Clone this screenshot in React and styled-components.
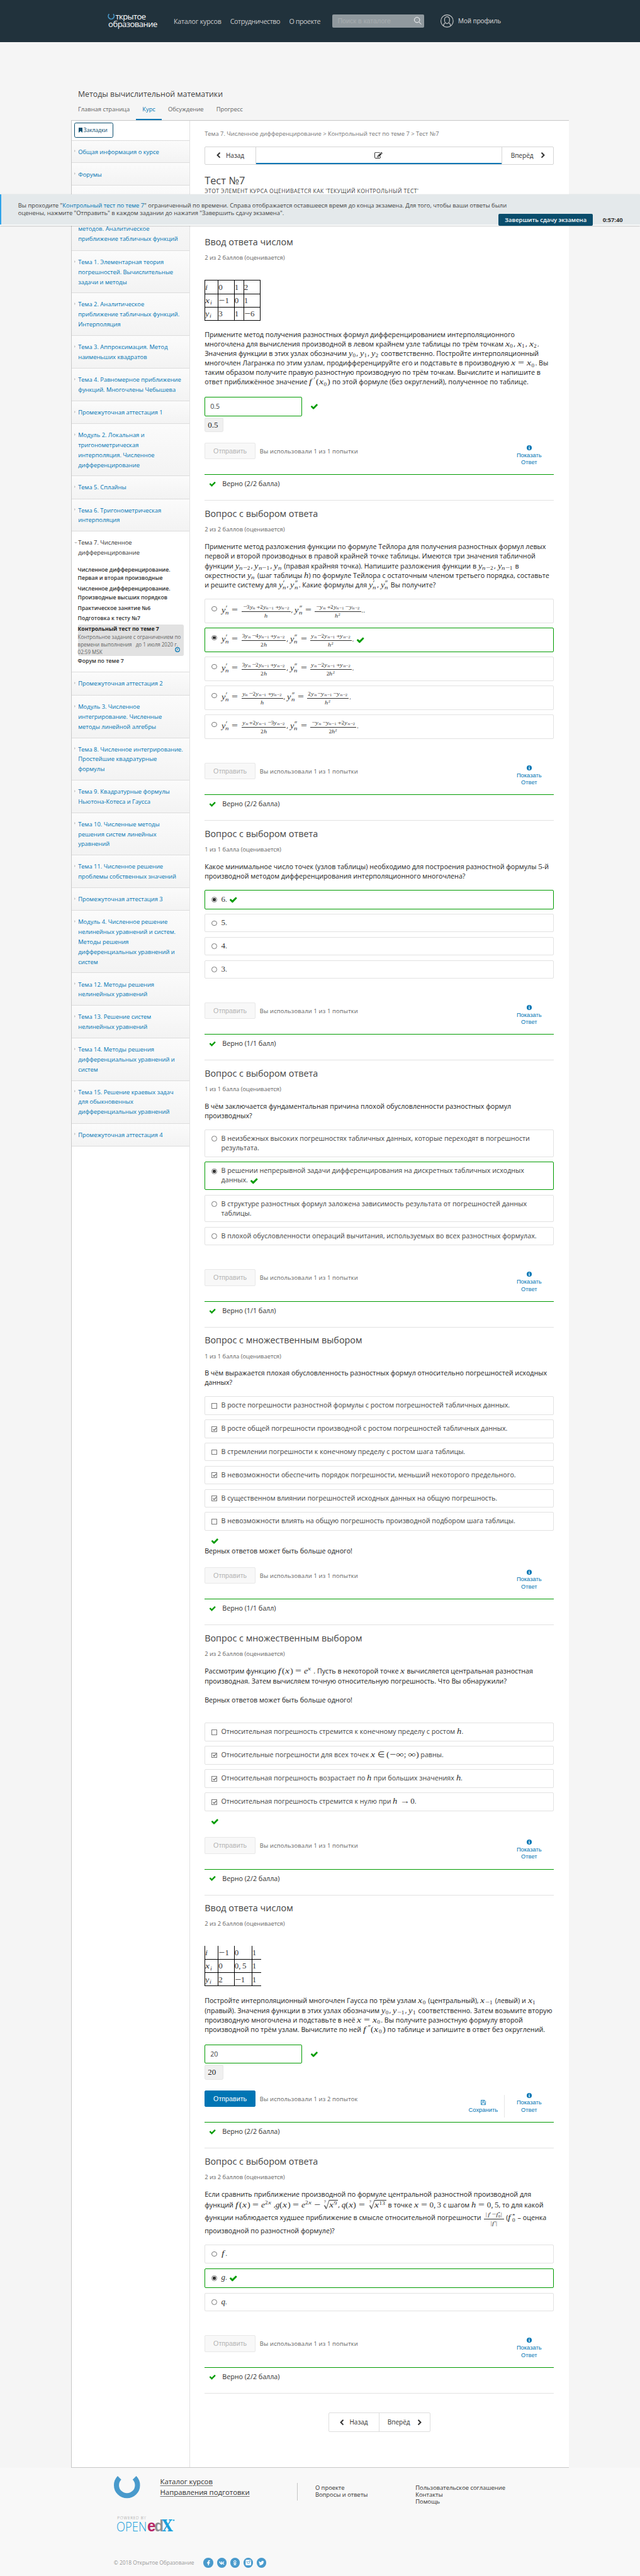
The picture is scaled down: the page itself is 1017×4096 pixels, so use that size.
import React from 'react';
import styled, { createGlobalStyle, css } from 'styled-components';
import { FaFacebookF, FaVk, FaOdnoklassniki, FaTwitter } from 'react-icons/fa';

const Global = createGlobalStyle`
  html, body { margin: 0; padding: 0; overflow: hidden; background: #f8f8f8; }
  *, *::before, *::after { box-sizing: border-box; }
`;

const sans = `"Open Sans", "Noto Sans", sans-serif`;
const arial = `"Liberation Sans", Arial, sans-serif`;
const serif = `"Liberation Serif", "Times New Roman", serif`;

const Page = styled.div`
  position: relative;
  zoom: 0.6697;
  width: 1519px;
  height: 6116px;
  background: #f5f5f5;
  font-family: ${sans};
  color: #313131;
  white-space: nowrap;
  overflow: hidden;
`;

/* ---------- icons ---------- */
const paths = {
  check: 'M1671 566q0 40-28 68l-724 724-136 136q-28 28-68 28t-68-28l-136-136-362-362q-28-28-28-68t28-68l136-136q28-28 68-28t68 28l294 295 656-657q28-28 68-28t68 28l136 136q28 28 28 68z',
  left: 'M1427 301l-531 531 531 531q19 19 19 45t-19 45l-166 166q-19 19-45 19t-45-19l-742-742q-19-19-19-45t19-45l742-742q19-19 45-19t45 19l166 166q19 19 19 45t-19 45z',
  edit: 'M888 1184l116-116-152-152-116 116v56h96v96h56zm440-720q-16-16-33 1l-350 350q-17 17-1 33t33-1l350-350q17-17 1-33zm80 594v190q0 119-84.5 203.5t-203.5 84.5h-832q-119 0-203.5-84.5t-84.5-203.5v-832q0-119 84.5-203.5t203.5-84.5h832q63 0 117 25 15 7 18 23 3 17-9 29l-49 49q-14 14-32 8-23-6-45-6h-832q-66 0-113 47t-47 113v832q0 66 47 113t113 47h832q66 0 113-47t47-113v-126q0-13 9-22l64-64q15-15 35-7t20 29zm-96-738l288 288-672 672h-288v-288zm444 132l-92 92-288-288 92-92q28-28 68-28t68 28l152 152q28 28 28 68t-28 68z',
};
const Svg = styled.svg`display: block; flex: none; overflow: visible;`;
const InlineSvg = styled(Svg)`display: inline-block; vertical-align: -2px; margin: -4px 0 -4px ${(p) => p.$gap || 0}px;`;

const Check = ({ size = 19, inline, gap }) => {
  const C = inline ? InlineSvg : Svg;
  return <C $gap={gap} width={size} height={size} viewBox="0 0 1792 1792" fill="#009b00"><path d={paths.check} /></C>;
};
const Chevron = ({ flip }) => (
  <Svg width="15" height="15" viewBox="0 0 1792 1792" fill="#333">
    <path d={paths.left} transform={flip ? 'translate(1792 0) scale(-1 1)' : undefined} />
  </Svg>
);
const Info = () => (
  <Svg width="12" height="12" viewBox="0 0 12 12">
    <circle cx="6" cy="6" r="6" fill="#0075b4" />
    <path d="M5 2h2v1.600H5zM4.200 4.700H7v3.800h.8v1.300H4.200V8.500H5V6h-.8z" fill="#fff" />
  </Svg>
);
const Floppy = () => (
  <Svg width="12" height="12" viewBox="0 0 12 12" fill="none" stroke="#0075b4" strokeWidth="1.1">
    <path d="M.6 .6h8.200l2.600 2.600v8.200H.6zM2.800 .6v3.600h5.400V.6M6.400 1.200v2M2.400 11.400V7h7.200v4.400" />
  </Svg>
);
const Clock = () => (
  <Svg width="12" height="12" viewBox="0 0 12 12" fill="none" stroke="#0075b4" strokeWidth="1.7">
    <circle cx="6" cy="6" r="5" /><path d="M6.400 3v3.400H4" strokeWidth="1.1" />
  </Svg>
);
const Photo = () => (
  <Svg width="14" height="14" viewBox="0 0 14 14">
    <rect x="0.500" y="0.500" width="13" height="13" rx="2" fill="#fff" />
    <path d="M1.500 4.500h3.500M9 4.500h3.500" stroke="#499acc" strokeWidth="1" />
    <rect x="9.500" y="1.800" width="2.300" height="2" fill="#499acc" />
    <circle cx="7" cy="7" r="2.700" fill="#fff" stroke="#499acc" strokeWidth="1.2" />
  </Svg>
);
const Horseshoe = ({ size, stroke }) => (
  <Svg width={size} height={size} viewBox="0 0 62 62" fill="none" stroke="#499acc" strokeWidth={stroke}>
    <path d="M13.200 13.200A25 25 0 1 0 48.800 13.200" />
  </Svg>
);

/* ---------- math ---------- */
const MathBox = styled.span`
  font-family: ${serif};
  font-size: ${(p) => p.$size || 19.4}px;
  line-height: 0;
  color: #333;
`;
const Sym = styled.span`
  display: inline-block;
  font-style: ${(p) => (p.$up ? 'normal' : 'italic')};
  width: ${(p) => p.$w}em;
  margin: 0 ${(p) => p.$m || 0}em;
  transform: scaleX(${(p) => p.$k || 1});
  transform-origin: left;
`;
const Prime = styled.span`
  display: inline-block;
  width: ${(p) => (p.$two ? 0.5 : 0.3)}em;
  transform: translateY(0.2em) skewX(-10deg) scale(1.15, 1.5);
  transform-origin: left;
`;
const Script = styled.span`
  font-size: 0.707em;
  position: relative;
  top: ${(p) => (p.$sup ? '-0.55em' : '0.24em')};
  margin-right: 0.14em;
`;
const Pair = styled.span`
  display: inline-flex;
  flex-direction: column;
  font-size: 0.707em;
  line-height: 0.86em;
  vertical-align: 0.52em;
  margin: -1em 0.13em -1em 0;
`;
const glyphs = { x: [0.572, 1.22], y: [0.51, 1.1], f: [0.51, 1.25], h: [0.576, 1.12], g: [0.49, 1], q: [0.47, 1], n: [0.6, 1.18], i: [0.345, 1.1], e: [0.466, 1.05] };
const upright = { '~': [0.778, 1.36], '∞': [1, 1.38], ',': [0.44, 1], ';': [0.44, 1], '(': [0.389, 1.1], ')': [0.389, 1.1] };
const binary = { '=': 0.278, '−': 0.222, '+': 0.222, '∈': 0.278, '→': 0.278 };
const stretch = { '→': [1, 1.2], '∈': [0.778, 1] };

function tex(s, script) {
  const out = [];
  const group = (i) => { const e = s.indexOf('}', i); return [s.slice(i + 2, e), e + 1]; };
  let i = 0;
  while (i < s.length) {
    const c = s[i];
    if (c === '_' || c === '^') {
      const [a, next] = group(i);
      if (c === '_' && s[next] === '^') {
        const [b, after] = group(next);
        out.push(<Pair key={i}><span>{tex(b, true)}</span><span>{tex(a, true)}</span></Pair>);
        i = after;
      } else {
        out.push(<Script key={i} $sup={c === '^'}>{tex(a, true)}</Script>);
        i = next;
      }
      continue;
    }
    if (glyphs[c]) out.push(<Sym key={i} $w={glyphs[c][0]} $k={glyphs[c][1]}>{c}</Sym>);
    else if (c === '′' || c === '″') out.push(<Prime key={i} $two={c === '″'}>{c}</Prime>);
    else if (upright[c]) out.push(<Sym key={i} $up $w={upright[c][0]} $k={upright[c][1]}>{c === '~' ? '−' : c}</Sym>);
    else if (binary[c]) {
      const [w, k] = stretch[c] || [0.778, 1.36];
      out.push(<Sym key={i} $up $w={w} $k={k} $m={script ? 0 : binary[c]}>{c}</Sym>);
    } else out.push(c);
    i += 1;
  }
  return out;
}
const M = ({ children, size }) => <MathBox $size={size}>{tex(children)}</MathBox>;

const FracBox = styled.span`
  display: inline-flex;
  flex-direction: column;
  align-items: center;
  width: ${(p) => p.$w}px;
  margin: -20px 1px -20px 2px;
  font-size: 13.7px;
  vertical-align: 9.4px;
`;
const Num = styled.span`
  display: ${(p) => (p.$tight ? 'block' : 'flex')};
  align-items: baseline;
  align-self: stretch;
  justify-content: space-between;
  text-align: center;
  line-height: 14px;
  padding: 0 2px 2.8px;
  border-bottom: 1.5px solid #333;
`;
const Den = styled.span`line-height: 18px;`;
const Frac = ({ n, d, w, tight }) => (
  <MathBox><FracBox $w={w}><Num $tight={tight}>{tex(n, true)}</Num><Den>{tex(d, true)}</Den></FracBox></MathBox>
);
const RootBody = styled.span`
  display: inline-block;
  line-height: 21px;
  margin: -8px 0;
  border-top: 1.5px solid #333;
  padding-right: 1px;
  & ${Script} { top: -0.42em; line-height: 0; }
`;
const RootSign = styled.svg`display: inline-block; vertical-align: 4px; margin: -8px 0; overflow: visible;`;
const Root = ({ children }) => (
  <MathBox>
    <RootSign width="17" height="22" viewBox="0 0 17 22" fill="none" stroke="#333" strokeWidth="1.2">
      <text x="4" y="8" fontSize="10" fill="#333" stroke="none">7</text>
      <path d="M4 14.500l2-1.200" />
      <path d="M6 13.300l3.600 7.700" strokeWidth="1.9" />
      <path d="M9.600 21.500L16.800 0.200" />
    </RootSign>
    <RootBody>{tex(children)}</RootBody>
  </MathBox>
);

/* ---------- header ---------- */
const Header = styled.header`
  height: 100px;
  background: #21323c;
  display: flex;
  align-items: flex-start;
  padding-left: 255px;
  color: #ccc;
`;
const Logo = styled.div`width: 157px; padding-top: 30px; color: #fff; font-size: 19.500px; line-height: 18px;`;
const LogoTop = styled.div`display: flex; gap: 2px; height: 18px; letter-spacing: -0.9px; line-height: 20px;`;
const LogoBottom = styled.div`padding-left: 2px; line-height: 18px; letter-spacing: -0.8px;`;
const HeadLink = styled.a`
  font-size: 16px;
  line-height: 22px;
  padding-top: 40px;
  width: ${(p) => p.$w}px;
  letter-spacing: ${(p) => p.$ls || 0}px;
`;
const Search = styled.div`
  margin-top: 35px;
  width: 219px;
  height: 30px;
  border-radius: 3px;
  background: #90999e;
  color: #a7adb0;
  font: 16px/30px ${arial};
  padding: 0 6px 0 13px;
  display: flex;
  justify-content: space-between;
  align-items: center;
`;
const Profile = styled.div`
  display: flex;
  gap: 11px;
  padding: 34px 0 0 38px;
  font: 16px/31px ${arial};
`;

/* ---------- course head ---------- */
const CourseHead = styled.div`height: 185px; padding: 109px 0 0 185px;`;
const CourseName = styled.div`font-size: 18.500px; line-height: 29px; height: 28px; color: #434343; font-weight: 500;`;
const Tabs = styled.nav`display: flex; margin: 9px 0 0 -15px; height: 39px;`;
const Tab = styled.a`
  padding: 0 15px;
  height: 39px;
  font-size: 14px;
  line-height: 28px;
  color: ${(p) => (p.$on ? '#0075b4' : '#646464')};
  border-bottom: 4px solid ${(p) => (p.$on ? '#0075b4' : 'transparent')};
`;

const Shell = styled.div`
  margin-left: 169px;
  width: 1181px;
  height: 5574px;
  border: solid #c8c8c8;
  border-width: 1px 0 1px 1px;
  background: #fff;
  display: flex;
`;
const Sidebar = styled.aside`width: 280px; border-right: 1px solid #e2e2e2;`;
const BookmarkBar = styled.div`height: 46px; padding: 5px;`;
const Bookmark = styled.a`
  display: flex;
  align-items: center;
  gap: 2px;
  width: 94px;
  height: 36px;
  padding-left: 10px;
  border: 1px solid #0a4d6e;
  border-radius: 4px;
  color: #0a4d6e;
  font-size: 13px;
  letter-spacing: -0.2px;
`;
const Item = styled.div`
  height: ${(p) => p.$h}px;
  border-top: ${(p) => p.$bt ?? 1}px solid #dcdcdc;
  background: ${(p) => (p.$open ? '#fff' : 'linear-gradient(#fbfbfb, #f3f3f3)')};
  padding: 15px 0 0 5px;
  display: flex;
  align-items: flex-start;
  font-size: 14px;
  line-height: 23.670px;
  color: ${(p) => (p.$open ? '#313131' : '#0075b4')};
`;
const Arrow = styled.span`
  width: 4px;
  margin: 7px 6px 0 0;
  border-left: 4px solid #c4c4c4;
  border-top: 4px solid transparent;
  border-bottom: 4px solid transparent;
  ${(p) => p.$down && css`
    width: 8px; margin: 10px 2px 0 0;
    border: 4px solid transparent; border-top-color: #c4c4c4; border-bottom: 0;
  `}
`;
const ClippedItem = styled(Item)`align-items: flex-end; padding: 0 0 16px 15px;`;
const Sub = styled.div`
  font-size: 12.950px;
  font-weight: 600;
  line-height: 20.500px;
  margin-bottom: ${(p) => p.$mb ?? 4.5}px;
`;
const Current = styled.div`
  margin: 3px 0 4px 14px;
  width: 251px;
  height: 74px;
  border-radius: 4px;
  background: #e2e2e2;
  font-size: 12px;
  line-height: 17.600px;
  color: #666;
  position: relative;
`;
const CurrentName = styled.div`font-size: 12.950px; font-weight: 700; color: #222; line-height: 21px; height: 21px;`;
const ClockSpot = styled.span`position: absolute; right: 8px; bottom: 9px;`;
const Open = styled.div`height: 334.500px; border-top: 1px solid #dcdcdc;`;
const OpenSubs = styled.div`padding-left: 14px;`;

/* ---------- main column ---------- */
const Main = styled.main`width: 829px; margin-left: 35px; padding-top: 21px; display: flex; flex-direction: column;`;
const Crumbs = styled.div`font-size: 14px; line-height: 20px; color: #777;`;
const Seq = styled.div`
  margin-top: 20px;
  height: 44px;
  display: flex;
  border: 1px solid #d5d5d5;
  border-radius: 3px;
  font: 15px/42px ${sans};
  color: #313131;
`;
const SeqBtn = styled.div`
  display: flex;
  align-items: center;
  width: ${(p) => p.$w}px;
  gap: ${(p) => p.$gap || 15}px;
  padding-left: ${(p) => p.$pl}px;
`;
const SeqMid = styled.div`
  flex: 1;
  border: solid #d5d5d5;
  border-width: 0 1px;
  box-shadow: inset 0 -3px #0075b4;
  display: flex;
  align-items: center;
  justify-content: center;
`;
const UnitTitle = styled.h1`margin: 21px 0 0; font-size: 24.500px; font-weight: 400; line-height: 32px; color: #434343;`;
const Grade = styled.div`font-size: 13px; line-height: 18px; letter-spacing: 0.57px; color: #434343; margin-bottom: 82px;`;

const ProblemBox = styled.section`
  height: ${(p) => p.$h}px;
  border-bottom: 1.5px solid #e2e2e2;
  padding-top: 15.800px;
  display: flex;
  flex-direction: column;
  flex: none;
`;
const PTitle = styled.h3`margin: 0; font-size: 21.500px; font-weight: 400; line-height: 30px; color: #434343;`;
const Score = styled.div`margin-top: 12px; font-size: 14px; line-height: 20px; color: #646464;`;
const Body = styled.div`flex: 1; padding-top: ${(p) => p.$pt ?? 20}px;`;
const Line = styled.div`
  height: ${(p) => 22.4 + (p.$gap || 0)}px;
  padding-top: ${(p) => p.$gap || 0}px;
  font-size: 16px;
  line-height: 22.400px;
  color: #222;
`;
const Options = styled.div`display: flex; flex-direction: column; gap: 11px; margin-top: ${(p) => p.$mt || 21}px;`;
const Option = styled.label`
  height: ${(p) => p.$h || 44}px;
  border: 1.5px solid ${(p) => (p.$good ? '#009b00' : '#e2e2e2')};
  border-radius: 3px;
  padding: ${(p) => p.$pt || 9}px 0 0 15px;
  display: flex;
  align-items: flex-start;
  gap: 10px;
  font-size: 16px;
  line-height: 22.400px;
  color: #434343;
`;
const Radio = styled.span`
  flex: none;
  width: 13px;
  height: 13px;
  margin-top: ${(p) => p.$mt || 5.5}px;
  border: 1px solid #777;
  border-radius: ${(p) => (p.$square ? 0 : '50%')};
  background: ${(p) => (p.$on && !p.$square ? 'radial-gradient(#333 0 3.800px, #fff 4.400px)' : '#fff')};
  display: flex;
  align-items: center;
  justify-content: center;
`;
const Tick = () => <Svg width="9" height="8" viewBox="0 0 9 8" fill="none" stroke="#444" strokeWidth="1.5"><path d="M.8 4l2.500 2.700L8.300 1" /></Svg>;

const InputRow = styled.div`display: flex; align-items: center; gap: 19px; margin-top: ${(p) => p.$mt || 23.4}px;`;
const Input = styled.div`
  width: 232px;
  height: 46px;
  border: 1.5px solid #009b00;
  border-radius: 3px;
  padding-left: 12px;
  font-size: 16px;
  line-height: 44px;
  color: #434343;
`;
const Preview = styled.div`
  margin-top: 3px;
  width: 44px;
  height: 35px;
  border: 1px solid #e6e6e6;
  border-radius: 4px;
  background: #f0f0f0;
  padding: 0 0 0 6px;
  font: 19.4px/33px ${serif};
  color: #222;
`;
const CheckLine = styled.div`margin: 15px 0 0 15px; height: 20px; display: flex; align-items: center;`;

const Actions = styled.div`height: 75.500px; display: flex; align-items: flex-start;`;
const Submit = styled.div`
  width: 121px;
  height: 39.700px;
  border: 1px solid ${(p) => (p.$on ? '#0075b4' : '#e8e8e8')};
  border-radius: 3px;
  background: ${(p) => (p.$on ? '#0075b4' : '#f8f8f8')};
  color: ${(p) => (p.$on ? '#fff' : '#b4b4b4')};
  font: 16px/38px ${arial};
  text-align: center;
`;
const Attempts = styled.div`margin-left: 10px; flex: 1; font-size: 14px; line-height: 41px; color: #646464; letter-spacing: 0.25px;`;
const ActionBtn = styled.div`
  margin-top: ${(p) => p.$mt || 6}px;
  width: ${(p) => p.$w}px;
  display: flex;
  flex-direction: column;
  align-items: center;
  text-align: center;
  color: #0075b4;
  font: 14px/17px ${arial};
  gap: 4px;
`;
const Divider = styled.div`width: 1px; height: ${(p) => p.$h}px; margin-top: ${(p) => p.$mt}px; background: ${(p) => p.$c || '#e6e6e6'};`;
const Feedback = styled.div`
  height: 61px;
  border-top: 2px solid #009b00;
  padding-left: 10px;
  display: flex;
  align-items: flex-start;
  gap: 15px;
  font-size: 16px;
  line-height: 42px;
  color: #313131;
  & svg { margin-top: 13px; }
`;

const Table = styled.table`
  margin-top: 23px;
  border-collapse: collapse;
  table-layout: fixed;
  width: ${(p) => p.$w}px;
  font: 19.4px/20px ${serif};
  & td {
    height: 31.600px;
    padding: 0;
    border: 1.5px solid #000;
    vertical-align: middle;
    line-height: 20px;
  }
  ${(p) => p.$open && css`
    tr:first-child td { border-top: 0; }
    td:last-child { border-right: 0; }
  `}
`;
const MathTable = ({ cols, rows, open }) => (
  <Table $w={cols.reduce((a, b) => a + b, 0)} $open={open}>
    <colgroup>{cols.map((c, i) => <col key={i} width={c} />)}</colgroup>
    <tbody>{rows.map((r, i) => <tr key={i}>{r.map((c, j) => <td key={j}><M>{c}</M></td>)}</tr>)}</tbody>
  </Table>
);

function Problem({ h, title, score, pt, children, verdict, retry }) {
  return (
    <ProblemBox $h={h}>
      <PTitle>{title}</PTitle>
      <Score>{score}</Score>
      <Body $pt={pt}>{children}</Body>
      <Actions>
        <Submit $on={retry}>Отправить</Submit>
        <Attempts>Вы использовали {retry ? '1 из 2 попыток' : '1 из 1 попытки'}</Attempts>
        {retry && <><ActionBtn $w={98} $mt={23}><Floppy />Сохранить</ActionBtn><Divider $h={54} $mt={11} /></>}
        <ActionBtn $w={118}><Info /><span>Показать<br />Ответ</span></ActionBtn>
      </Actions>
      <Feedback><Check size={17} />Верно {verdict}</Feedback>
    </ProblemBox>
  );
}
const Choice = ({ on, good, square, h, pt, rmt, children }) => (
  <Option $good={good} $h={h} $pt={pt}>
    <Radio $on={on} $square={square} $mt={rmt}>{on && square && <Tick />}</Radio>
    <span>{children}{good && <Check size={20} inline gap={5} />}</span>
  </Option>
);
const Formula = ({ n1, d1, w1, n2, d2, w2, end = '.', good }) => (
  <Choice h={57.7} pt={14.8} rmt={0.5} on={good} good={good}>
    <M>{'y_{n}^{′}='}</M><Frac n={n1} d={d1} w={w1} />, <M>{'y_{n}^{″}='}</M><Frac n={n2} d={d2} w={w2} />{end}
  </Choice>
);

const PRADIO = 'Вопрос с выбором ответа';
const PMULTI = 'Вопрос с множественным выбором';
const PNUM = 'Ввод ответа числом';
const S1 = '1 из 1 балла (оценивается)';
const S2 = '2 из 2 баллов (оценивается)';

const before = [
  [100.5, ['Тема 1. Элементарная теория', 'погрешностей. Вычислительные', 'задачи и методы']],
  [101, ['Тема 2. Аналитическое', 'приближение табличных функций.', 'Интерполяция']],
  [78, ['Тема 3. Аппроксимация. Метод', 'наименьших квадратов']],
  [77, ['Тема 4. Равномерное приближение', 'функций. Многочлены Чебышева']],
  [54, ['Промежуточная аттестация 1']],
  [124.5, ['Модуль 2. Локальная и', 'тригонометрическая', 'интерполяция. Численное', 'дифференцирование']],
  [54, ['Тема 5. Сплайны']],
  [77.5, ['Тема 6. Тригонометрическая', 'интерполяция']],
];
const after = [
  [54.5, ['Промежуточная аттестация 2']],
  [101, ['Модуль 3. Численное', 'интегрирование. Численные', 'методы линейной алгебры']],
  [100.5, ['Тема 8. Численное интегрирование.', 'Простейшие квадратурные', 'формулы']],
  [77.5, ['Тема 9. Квадратурные формулы', 'Ньютона-Котеса и Гаусса']],
  [100.5, ['Тема 10. Численные методы', 'решения систем линейных', 'уравнений']],
  [77.5, ['Тема 11. Численное решение', 'проблемы собственных значений']],
  [54, ['Промежуточная аттестация 3']],
  [148.5, ['Модуль 4. Численное решение', 'нелинейных уравнений и систем.', 'Методы решения', 'дифференциальных уравнений и', 'систем']],
  [77.5, ['Тема 12. Методы решения', 'нелинейных уравнений']],
  [77.5, ['Тема 13. Решение систем', 'нелинейных уравнений']],
  [100.5, ['Тема 14. Методы решения', 'дифференциальных уравнений и', 'систем']],
  [101.5, ['Тема 15. Решение краевых задач', 'для обыкновенных', 'дифференциальных уравнений']],
  [54, ['Промежуточная аттестация 4']],
];
const Lines = ({ of }) => <span>{of.map((t, i) => <React.Fragment key={i}>{i > 0 && <br />}{t}</React.Fragment>)}</span>;
const renderItem = ([h, lines]) => <Item key={lines[0]} $h={h}><Arrow /><Lines of={lines} /></Item>;
const SideEnd = styled.div`border-top: 1px solid #dcdcdc;`;

/* ---------- exam banner ---------- */
const Banner = styled.div`
  position: absolute;
  top: 461px;
  left: 0;
  width: 1519px;
  height: 75px;
  background: #f6f8f8;
  box-shadow: 0 2px 3px rgba(0, 0, 0, 0.45);
`;
const BannerInner = styled.div`
  height: 72px;
  background: #e4e9eb;
  border-left: 4px solid #2ea3ea;
  padding: 19px 0 0 40px;
  font-size: 14px;
  line-height: 16.700px;
  color: #434343;
  display: flex;
  align-items: flex-start;
  & a { color: #0075b4; }
`;
const BannerText = styled.div`width: 1140px; flex: none;`;
const EndExam = styled.div`
  margin-top: 27px;
  width: 224px;
  height: 29px;
  border-radius: 3px;
  background: #0a4d6c;
  color: #fff;
  font-weight: 600;
  font-size: 14px;
  line-height: 29px;
  text-align: center;
`;
const Timer = styled.div`margin: 27px 0 0 23px; font-weight: 700; line-height: 29px; color: #313131;`;

/* ---------- footer ---------- */
const BottomNav = styled.div`
  margin: 45.500px auto 0;
  width: 242px;
  height: 46px;
  border: 1px solid #dedede;
  border-radius: 3px;
  display: flex;
  font: 15px/43px ${sans};
`;
const Footer = styled.footer`height: 257px; background: #f8f8f8; padding: 11px 0 0 270px;`;
const FootRow = styled.div`display: flex; align-items: flex-start; height: 100px;`;
const Major = styled.div`
  width: 325px;
  margin-left: 48px;
  padding-top: 10px;
  font-size: 17px;
  line-height: 25px;
  color: #313131;
  & u { text-underline-offset: 3px; text-decoration-color: #777; text-decoration-thickness: 1.5px; }
`;
const Minor = styled.div`width: ${(p) => p.$w}px; padding-top: 30px; font-size: 14px; line-height: 16px; color: #313131;`;
const Inset = styled.div`padding-left: 42px;`;
const Copy = styled.div`display: flex; align-items: center; height: 24px; margin-top: 63px; font-size: 12.500px; color: #999;`;
const Social = styled.span`
  width: 23px;
  height: 23px;
  margin-right: 8.600px;
  border-radius: 50%;
  background: #499acc;
  color: #fff;
  display: flex;
  align-items: center;
  justify-content: center;
  font-size: 13px;
`;
const CopyText = styled.span`width: 213px; margin-top: -3px;`;

export default function App() {
  return (
    <Page>
      <Global />
      <Header>
        <Logo>
          <LogoTop><Horseshoe size={17} stroke={9} />ткрытое</LogoTop>
          <LogoBottom>образование</LogoBottom>
        </Logo>
        <HeadLink $w={134} $ls={-0.3}>Каталог курсов</HeadLink>
        <HeadLink $w={140} $ls={-0.6}>Сотрудничество</HeadLink>
        <HeadLink $w={102} $ls={-0.6}>О проекте</HeadLink>
        <Search>
          Поиск в каталоге
          <Svg width="18" height="18" viewBox="0 0 18 18" fill="none" stroke="#fff" strokeWidth="1.4"><circle cx="7" cy="7" r="6.3" /><path d="M11.500 11.500L17 17.500" /></Svg>
        </Search>
        <Profile>
          <Svg width="31" height="31" viewBox="0 0 31 31" fill="none" stroke="#ccc" strokeWidth="1.7">
            <circle cx="15.5" cy="15.5" r="14.6" />
            <path d="M15.500 5.500c4 0 6 3 6 7.500s-2.500 8.500-6 8.500-6-4-6-8.500 2-7.500 6-7.500zM7 27c.5-4.500 2-6 4.500-7.500M24 27c-.5-4.500-2-6-4.500-7.500" />
          </Svg>
          Мой профиль
        </Profile>
      </Header>

      <CourseHead>
        <CourseName>Методы вычислительной математики</CourseName>
        <Tabs><Tab>Главная страница</Tab><Tab $on>Курс</Tab><Tab>Обсуждение</Tab><Tab>Прогресс</Tab></Tabs>
      </CourseHead>

      <Shell>
        <Sidebar>
          <BookmarkBar>
            <Bookmark><Svg width="9" height="12" viewBox="0 0 9 12" fill="#0a4d6e"><path d="M0 0h9v12L4.500 8 0 12z" /></Svg>Закладки</Bookmark>
          </BookmarkBar>
          <Item $h={53.5}><Arrow />Общая информация о курсе</Item>
          <Item $h={53}><Arrow />Форумы</Item>
          <ClippedItem $h={155.5} $bt={2}><Lines of={['методов. Аналитическое', 'приближение табличных функций']} /></ClippedItem>
          {before.map(renderItem)}
          <Open>
            <Item $h={81} $open $bt={0}><Arrow $down /><Lines of={['Тема 7. Численное', 'дифференцирование']} /></Item>
            <OpenSubs>
              <Sub>Численное дифференцирование.<br />Первая и вторая производные</Sub>
              <Sub>Численное дифференцирование.<br />Производные высших порядков</Sub>
              <Sub>Практическое занятие №6</Sub>
              <Sub $mb={0}>Подготовка к тесту №7</Sub>
            </OpenSubs>
            <Current>
              <CurrentName>Контрольный тест по теме 7</CurrentName>
              Контрольное задание с ограничением по<br />времени выполнения &nbsp; до 1 июля 2020 г.<br />02:59 MSK
              <ClockSpot><Clock /></ClockSpot>
            </Current>
            <OpenSubs><Sub>Форум по теме 7</Sub></OpenSubs>
          </Open>
          {after.map(renderItem)}
          <SideEnd />
        </Sidebar>

        <Main>
          <Crumbs>Тема 7. Численное дифференцирование &gt; Контрольный тест по теме 7 &gt; Тест №7</Crumbs>
          <Seq>
            <SeqBtn $w={119} $pl={23} $gap={11}><Chevron />Назад</SeqBtn>
            <SeqMid><Svg width="19" height="19" viewBox="0 0 1792 1792" fill="#222"><path d={paths.edit} /></Svg></SeqMid>
            <SeqBtn $w={122} $pl={21}>Вперёд<Chevron flip /></SeqBtn>
          </Seq>
          <UnitTitle>Тест №7</UnitTitle>
          <Grade>ЭТОТ ЭЛЕМЕНТ КУРСА ОЦЕНИВАЕТСЯ КАК 'ТЕКУЩИЙ КОНТРОЛЬНЫЙ ТЕСТ'</Grade>

          <Problem h={644.5} title={PNUM} score={S2} verdict="(2/2 балла)">
            <MathTable cols={[31.6, 38, 22.5, 38.5]} rows={[['i', '0', '1', '2'], ['x_{i}', '~1', '0', '1'], ['y_{i}', '3', '1', '~6']]} />
            <Line $gap={22.4}>Примените метод получения разностных формул дифференцированием интерполяционного</Line>
            <Line>многочлена для вычисления производной в левом крайнем узле таблицы по трём точкам <M>{'x_{0}'}</M>, <M>{'x_{1}'}</M>, <M>{'x_{2}'}</M>.</Line>
            <Line $gap={0.4}>Значения функции в этих узлах обозначим <M>{'y_{0}'}</M>, <M>{'y_{1}'}</M>, <M>{'y_{2}'}</M> соответственно. Постройте интерполяционный</Line>
            <Line $gap={0.4}>многочлен Лагранжа по этим узлам, продифференцируйте его и подставьте в производную <M>{'x=x_{0}'}</M>. Вы</Line>
            <Line>таким образом получите правую разностную производную по трём точкам. Вычислите и напишите в</Line>
            <Line>ответ приближённое значение <M>{'f^{′}(x_{0})'}</M> по этой формуле (без округлений), полученное по таблице.</Line>
            <InputRow><Input>0.5</Input><Check /></InputRow>
            <Preview>0.5</Preview>
          </Problem>

          <Problem h={760} title={PRADIO} score={S2} verdict="(2/2 балла)">
            <Line $gap={0.5}>Примените метод разложения функции по формуле Тейлора для получения разностных формул левых</Line>
            <Line>первой и второй производных в правой крайней точке таблицы. Имеются три значения табличной</Line>
            <Line $gap={0.8}>функции <M>{'y_{n−2}'}</M>, <M>{'y_{n−1}'}</M>, <M>{'y_{n}'}</M> (правая крайняя точка). Напишите разложения функции в <M>{'y_{n−2}'}</M>, <M>{'y_{n−1}'}</M> в</Line>
            <Line $gap={0.5}>окрестности <M>{'y_{n}'}</M> (шаг таблицы <M>h</M>) по формуле Тейлора с остаточным членом третьего порядка, составьте</Line>
            <Line $gap={0.5}>и решите систему для <M>{'y_{n}^{′}'}</M>, <M>{'y_{n}^{″}'}</M>. Какие формулы для <M>{'y_{n}^{′}'}</M>, <M>{'y_{n}^{″}'}</M> Вы получите?</Line>
            <Options>
              <Formula n1="−3y_{n}+2y_{n−1}+y_{n−2}" d1="h" w1={117} n2="−y_{n}+2y_{n−1}−y_{n−2}" d2="h^{2}" w2={110} end=".." />
              <Formula n1="3y_{n}−4y_{n−1}+y_{n−2}" d1="2h" w1={106} n2="y_{n}−2y_{n−1}+y_{n−2}" d2="h^{2}" w2={99} good />
              <Formula n1="3y_{n}−2y_{n−1}+y_{n−2}" d1="2h" w1={106} n2="y_{n}−2y_{n−1}+y_{n−2}" d2="2h^{2}" w2={99} />
              <Formula n1="y_{n}−2y_{n−1}+y_{n−2}" d1="h" w1={99} n2="2y_{n}−y_{n−1}−y_{n−2}" d2="h^{2}" w2={99} />
              <Formula n1="y_{n}+2y_{n−1}−3y_{n−2}" d1="2h" w1={106} n2="−y_{n}−y_{n−1}+2y_{n−2}" d2="2h^{2}" w2={110} />
            </Options>
          </Problem>

          <Problem h={569} title={PRADIO} score={S1} verdict="(1/1 балл)">
            <Line>Какое минимальное число точек (узлов таблицы) необходимо для построения разностной формулы <M>5</M>-й</Line>
            <Line $gap={0.5}>производной методом дифференцирования интерполяционного многочлена?</Line>
            <Options>
              <Choice on good h={45.5} pt={10}><M>6</M>.</Choice>
              <Choice><M>5</M>.</Choice>
              <Choice><M>4</M>.</Choice>
              <Choice><M>3</M>.</Choice>
            </Options>
          </Problem>

          <Problem h={634} title={PRADIO} score={S1} verdict="(1/1 балл)">
            <Line>В чём заключается фундаментальная причина плохой обусловленности разностных формул</Line>
            <Line>производных?</Line>
            <Options>
              <Choice h={66}>В неизбежных высоких погрешностях табличных данных, которые переходят в погрешности<br />результата.</Choice>
              <Choice on good h={67}>В решении непрерывной задачи дифференцирования на дискретных табличных исходных<br />данных.</Choice>
              <Choice h={65.5}>В структуре разностных формул заложена зависимость результата от погрешностей данных<br />таблицы.</Choice>
              <Choice>В плохой обусловленности операций вычитания, используемых во всех разностных формулах.</Choice>
            </Options>
          </Problem>

          <Problem h={706.5} title={PMULTI} score={S1} verdict="(1/1 балл)">
            <Line>В чём выражается плохая обусловленность разностных формул относительно погрешностей исходных</Line>
            <Line>данных?</Line>
            <Options>
              <Choice square>В росте погрешности разностной формулы с ростом погрешностей табличных данных.</Choice>
              <Choice square on>В росте общей погрешности производной с ростом погрешностей табличных данных.</Choice>
              <Choice square>В стремлении погрешности к конечному пределу с ростом шага таблицы.</Choice>
              <Choice square on>В невозможности обеспечить порядок погрешности, меньший некоторого предельного.</Choice>
              <Choice square on>В существенном влиянии погрешностей исходных данных на общую погрешность.</Choice>
              <Choice square>В невозможности влиять на общую погрешность производной подбором шага таблицы.</Choice>
            </Options>
            <CheckLine><Check /></CheckLine>
            <Line $gap={2}>Верных ответов может быть больше одного!</Line>
          </Problem>

          <Problem h={641.5} title={PMULTI} score={S2} verdict="(2/2 балла)" pt={21}>
            <Line>Рассмотрим функцию <M>{'f(x)=e^{x}'}</M> . Пусть в некоторой точке <M>x</M> вычисляется центральная разностная</Line>
            <Line $gap={1.2}>производная. Затем вычисляем точную относительную погрешность. Что Вы обнаружили?</Line>
            <Line $gap={22.6}>Верных ответов может быть больше одного!</Line>
            <Options $mt={42}>
              <Choice square>Относительная погрешность стремится к конечному пределу с ростом <M>h</M>.</Choice>
              <Choice square on h={44.8}>Относительные погрешности для всех точек <M>{'x∈(~∞;∞)'}</M> равны.</Choice>
              <Choice square on>Относительная погрешность возрастает по <M>h</M> при больших значениях <M>h</M>.</Choice>
              <Choice square on>Относительная погрешность стремится к нулю при <M>{'h→0'}</M>.</Choice>
            </Options>
            <CheckLine><Check /></CheckLine>
          </Problem>

          <Problem h={601} title={PNUM} score={S2} verdict="(2/2 балла)" retry>
            <MathTable open cols={[31.6, 38, 42, 22.4]} rows={[['i', '~1', '0', '1'], ['x_{i}', '0', '0,5', '1'], ['y_{i}', '2', '~1', '1']]} />
            <Line $gap={23.6}>Постройте интерполяционный многочлен Гаусса по трём узлам <M>{'x_{0}'}</M> (центральный), <M>{'x_{~1}'}</M> (левый) и <M>{'x_{1}'}</M></Line>
            <Line $gap={0.6}>(правый). Значения функции в этих узлах обозначим <M>{'y_{0}'}</M>, <M>{'y_{~1}'}</M>, <M>{'y_{1}'}</M> соответственно. Затем возьмите вторую</Line>
            <Line $gap={0.4}>производную многочлена и подставьте в неё <M>{'x=x_{0}'}</M>. Вы получите разностную формулу второй</Line>
            <Line>производной по трём узлам. Вычислите по ней <M>{'f^{″}(x_{0})'}</M> по таблице и запишите в ответ без округлений.</Line>
            <InputRow><Input>20</Input><Check /></InputRow>
            <Preview>20</Preview>
          </Problem>

          <Problem h={582} title={PRADIO} score={S2} verdict="(2/2 балла)">
            <Line>Если сравнить приближение производной по формуле центральной разностной производной для</Line>
            <Line $gap={3.6}>функций <M>{'f(x)=e^{2x}'}</M> ,<M>{'g(x)=e^{2x}−'}</M><Root>{'x^{9}'}</Root>, <M>{'q(x)='}</M><Root>{'x^{13}'}</Root> в точке <M>{'x=0,3'}</M> с шагом <M>{'h=0,5'}</M>, то для какой</Line>
            <Line $gap={8}>функции наблюдается худшее приближение в смысле относительной погрешности <Frac tight n="|f'−f_{0}^{*}|" d="|f'|" w={48} /> (<M>{'f_{0}^{*}'}</M> – оценка</Line>
            <Line $gap={8.6}>производной по разностной формуле)?</Line>
            <Options>
              <Choice h={45}><M>f</M>.</Choice>
              <Choice on good h={47.5} pt={10}><M>g</M>.</Choice>
              <Choice><M>q</M>.</Choice>
            </Options>
          </Problem>

          <BottomNav>
            <SeqBtn $w={120} $pl={23} $gap={11}><Chevron />Назад</SeqBtn>
            <Divider $h={44} $mt={0} $c="#dedede" />
            <SeqBtn $w={120} $pl={19}>Вперёд<Chevron flip /></SeqBtn>
          </BottomNav>
        </Main>
      </Shell>

      <Footer>
        <FootRow>
          <Horseshoe size={62} stroke={12} />
          <Major><u>Каталог курсов</u><br /><u>Направления подготовки</u></Major>
          <Divider $h={42} $mt={25} $c="#c4c4c4" />
          <Minor $w={280}><Inset>О проекте<br />Вопросы и ответы</Inset></Minor>
          <Minor $w={220}>Пользовательское соглашение<br />Контакты<br />Помощь</Minor>
        </FootRow>
        <Svg width="150" height="40" viewBox="0 0 150 40">
          <text x="8" y="12" fontSize="9.5" fill="#8f8f8f" textLength="68" fontFamily="Open Sans" fontWeight="300">POWERED BY</text>
          <text x="6" y="40" fontSize="29.5" fill="#1ba0dc" textLength="72" lengthAdjust="spacingAndGlyphs" fontFamily="Open Sans" fontWeight="300">OPEN</text>
          <text x="96" y="40" fontSize="38" fill="#8e9093" textLength="22" lengthAdjust="spacingAndGlyphs" fontFamily="Liberation Sans" fontWeight="700">d</text>
          <text x="79" y="40" fontSize="38" fill="#b72667" textLength="20" lengthAdjust="spacingAndGlyphs" fontFamily="Liberation Sans" fontWeight="700">e</text>
          <text x="114" y="40" fontSize="39" fill="#1ba0dc" textLength="26" lengthAdjust="spacingAndGlyphs" fontFamily="DejaVu Serif" fontWeight="700">X</text>
          <circle cx="142" cy="14" r="1.8" fill="#1ba0dc" />
        </Svg>
        <Copy>
          <CopyText>© 2018 Открытое Образование</CopyText>
          <Social><FaFacebookF /></Social>
          <Social><FaVk /></Social>
          <Social><FaOdnoklassniki /></Social>
          <Social><Photo /></Social>
          <Social><FaTwitter /></Social>
        </Copy>
      </Footer>

      <Banner>
        <BannerInner>
          <BannerText>Вы проходите "<a>Контрольный тест по теме 7</a>" ограниченный по времени. Справа отображается оставшееся время до конца экзамена. Для того, чтобы ваши ответы были<br />оценены, нажмите "Отправить" в каждом задании до нажатия "Завершить сдачу экзамена".</BannerText>
          <EndExam>Завершить сдачу экзамена</EndExam>
          <Timer>0:57:40</Timer>
        </BannerInner>
      </Banner>
    </Page>
  );
}
